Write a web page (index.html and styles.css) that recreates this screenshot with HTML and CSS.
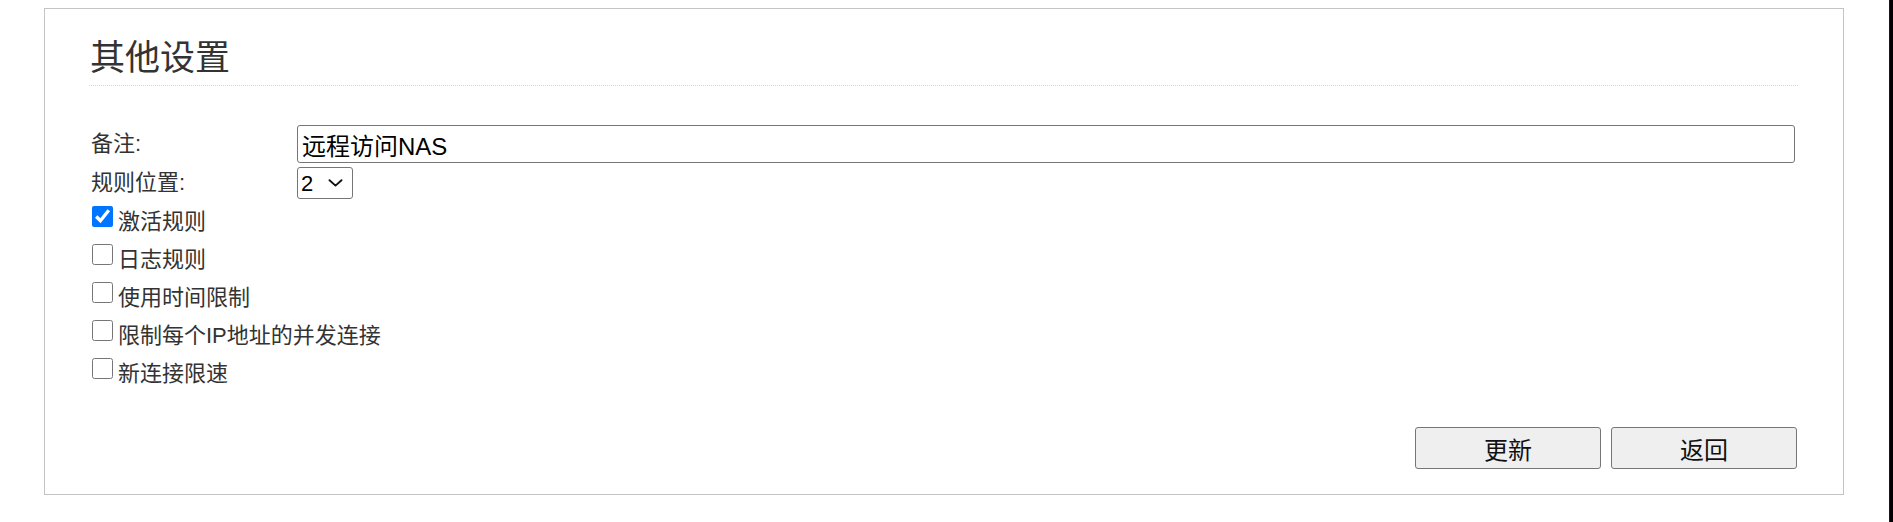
FILE: index.html
```html
<!DOCTYPE html>
<html lang="zh-CN">
<head>
<meta charset="utf-8">
<title>其他设置</title>
<link rel="stylesheet" href="styles.css">
</head>
<body>
<div class="panel">
  <h2 class="panel-title">其他设置</h2>
  <form class="form">
    <div class="field-row field-row-text">
      <label class="field-label" for="remark">备注:</label>
      <input class="text-input" id="remark" type="text" value="远程访问NAS">
    </div>
    <div class="field-row field-row-select">
      <label class="field-label" for="pos">规则位置:</label>
      <div class="select-wrap">
        <select class="select" id="pos">
          <option>1</option>
          <option selected>2</option>
          <option>3</option>
        </select>
        <svg class="select-arrow" width="15" height="8" viewBox="0 0 15 8"><path d="M1.5 1.2 L7.5 6.6 L13.5 1.2" fill="none" stroke="#111" stroke-width="1.9" stroke-linecap="round" stroke-linejoin="round"/></svg>
      </div>
    </div>
    <div class="checks">
      <label class="check-row"><input class="check" type="checkbox" checked><span class="check-text">激活规则</span></label>
      <label class="check-row"><input class="check" type="checkbox"><span class="check-text">日志规则</span></label>
      <label class="check-row"><input class="check" type="checkbox"><span class="check-text">使用时间限制</span></label>
      <label class="check-row"><input class="check" type="checkbox"><span class="check-text">限制每个IP地址的并发连接</span></label>
      <label class="check-row"><input class="check" type="checkbox"><span class="check-text">新连接限速</span></label>
    </div>
    <div class="actions">
      <button class="btn" type="button">更新</button>
      <button class="btn" type="button">返回</button>
    </div>
  </form>
</div>
<div class="edge-strip"></div>
</body>
</html>
```

FILE: styles.css
```css
html, body {
  margin: 0;
  padding: 0;
  background: #ffffff;
}

body {
  font-family: "Liberation Sans", "Noto Sans CJK SC", sans-serif;
  color: #333333;
  padding-top: 8px;
  padding-left: 44px;
}

.panel {
  box-sizing: border-box;
  width: 1800px;
  border: 1px solid #c4c4c4;
  background: #ffffff;
  padding: 27px 45px 25px 44px;
}

.panel-title {
  margin: 0;
  font-size: 35px;
  font-weight: normal;
  line-height: 44px;
  color: #333333;
  padding-left: 1px;
  padding-bottom: 5px;
  border-bottom: 1px dotted #d4d4d4;
}

.form {
  margin: 39px 0 0 0;
}

.field-row {
  display: grid;
  grid-template-columns: 208px 1fr;
  align-items: center;
  padding-right: 3px;
}

.field-row-select {
  margin-top: 4px;
}

.field-label {
  padding-left: 2px;
  font-size: 22px;
  line-height: 30px;
  color: #333333;
}

.text-input {
  box-sizing: border-box;
  height: 38px;
  width: 100%;
  margin: 0;
  border: 1px solid #767676;
  border-radius: 3px;
  padding: 0 4px;
  font-family: "Liberation Sans", "Noto Sans CJK SC", sans-serif;
  font-size: 24px;
  color: #000000;
  background: #ffffff;
  outline: none;
}

.select-wrap {
  position: relative;
  width: 56px;
  height: 32px;
}

.select {
  box-sizing: border-box;
  appearance: none;
  -webkit-appearance: none;
  width: 56px;
  height: 32px;
  margin: 0;
  border: 1px solid #767676;
  border-radius: 3px;
  padding: 0 0 0 3px;
  background: #ffffff;
  font-family: "Liberation Sans", "Noto Sans CJK SC", sans-serif;
  font-size: 22px;
  color: #000000;
  outline: none;
}

.select-arrow {
  position: absolute;
  left: 31px;
  top: 12px;
  pointer-events: none;
}

.checks {
  margin-top: 5px;
  display: flex;
  flex-direction: column;
}

.check-row {
  display: flex;
  align-items: flex-start;
  height: 38px;
  padding-left: 3px;
}

.check {
  width: 21px;
  height: 21px;
  margin: 2px 0 0 0;
  flex: none;
}

.check-text {
  margin-left: 5px;
  font-size: 22px;
  line-height: 36px;
  color: #333333;
}

.actions {
  margin-top: 33px;
  display: flex;
  justify-content: flex-end;
  gap: 10px;
  padding-right: 1px;
}

.btn {
  box-sizing: border-box;
  width: 186px;
  height: 42px;
  margin: 0;
  border: 1px solid #767676;
  border-radius: 3px;
  background: #efefef;
  font-family: "Liberation Sans", "Noto Sans CJK SC", sans-serif;
  font-size: 24px;
  color: #111111;
  padding: 0;
}

.edge-strip {
  position: fixed;
  top: 0;
  right: 0;
  bottom: 0;
  width: 4px;
  background: #050003;
  border-left: 1px solid #3a0612;
  box-sizing: border-box;
}
```
